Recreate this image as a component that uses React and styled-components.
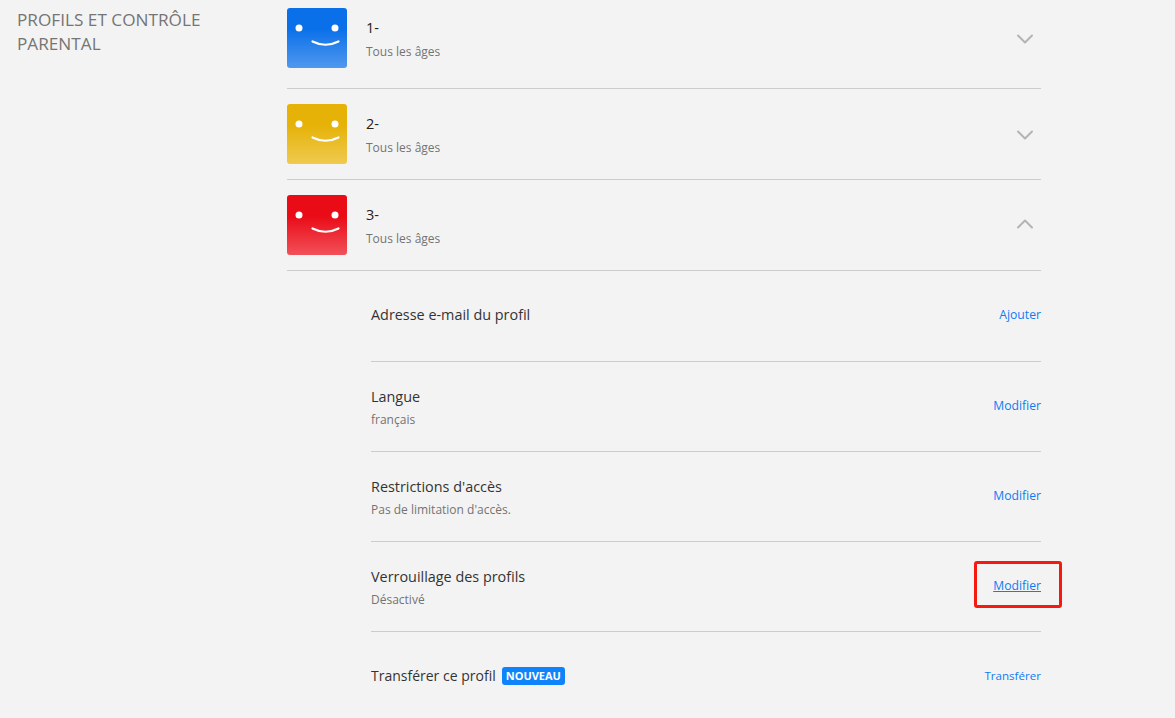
import React from "react";
import styled, { createGlobalStyle } from "styled-components";
import { ChevronDown, ChevronUp } from "lucide-react";

const GlobalStyle = createGlobalStyle`
  html, body {
    margin: 0;
    height: 100%;
    background: #f3f3f3;
    overflow: hidden;
  }
`;

const Page = styled.div`
  display: grid;
  grid-template-columns: 287px 754px;
  height: 718px;
  overflow: hidden;
  font-family: "Open Sans", "Noto Sans", sans-serif;
  color: #333;
`;

const SectionTitle = styled.h2`
  margin: 0;
  padding: 8px 0 0 17px;
  width: 210px;
  font-size: 17.2px;
  line-height: 24px;
  font-weight: 400;
  color: #757575;
`;

const ProfileRow = styled.div`
  display: flex;
  align-items: flex-start;
  box-sizing: border-box;
  height: ${({ $height }) => $height}px;
  padding-top: ${({ $top }) => $top}px;
  border-bottom: 1px solid #cccccc;
`;

const Avatar = styled.svg`
  display: block;
  flex: none;
  width: 60px;
  height: 60px;
  margin-right: 19px;
  border-radius: 3px;
  background: linear-gradient(
    180deg,
    ${({ $from }) => $from} 0%,
    ${({ $from }) => $from} 35%,
    ${({ $to }) => $to} 100%
  );
`;

const ProfileText = styled.div`
  flex: 1;
  padding-top: 9px;
`;

const ProfileName = styled.div`
  font-size: 14.5px;
  line-height: 22px;
  color: #222;
`;

const Hint = styled.div`
  font-size: 12px;
  line-height: 18px;
  margin-top: ${({ $gap }) => $gap}px;
  color: #737373;
`;

const Toggle = styled.div`
  display: flex;
  flex: none;
  margin: ${({ $top }) => $top}px 2px 0 0;
  color: #b3b3b3;
`;

const Details = styled.div`
  margin-left: 84px;
`;

const DetailRow = styled.div`
  display: flex;
  justify-content: space-between;
  align-items: flex-start;
  box-sizing: border-box;
  height: ${({ $height }) => $height}px;
  padding-top: ${({ $top }) => $top}px;
  border-bottom: ${({ $last }) => ($last ? "none" : "1px solid #cccccc")};
`;

const DetailTitle = styled.div`
  display: flex;
  align-items: center;
  font-size: ${({ $size }) => $size || 14.4}px;
  line-height: 22px;
  color: #333;
`;

const Badge = styled.span`
  margin-left: 6px;
  padding: 0 4px;
  height: 18px;
  line-height: 18px;
  border-radius: 3px;
  background: #0f84fa;
  color: #fff;
  font-size: 11px;
  font-weight: 700;
`;

const ActionLink = styled.a`
  position: relative;
  margin-top: ${({ $offset }) => $offset}px;
  font-size: ${({ $size }) => $size || 12.2}px;
  line-height: 22px;
  color: #0f7bf5;
  text-decoration: ${({ $active }) => ($active ? "underline" : "none")};
`;

const Highlight = styled.span`
  position: absolute;
  left: -19px;
  right: -21px;
  top: -14px;
  bottom: -11px;
  border: 3px solid #f5190f;
  border-radius: 3px;
`;

const Face = () => (
  <>
    <circle cx="12" cy="20" r="3.5" fill="#fff" />
    <circle cx="48" cy="20" r="3.5" fill="#fff" />
    <path d="M25.5 33.5 Q38.5 40 51.5 33.5" fill="none" stroke="#fff" strokeWidth="2.2" strokeLinecap="round" />
  </>
);

const profiles = [
  { name: "1-", from: "#0a70e9", to: "#5098ee", height: 89, top: 8, chevron: 17 },
  { name: "2-", from: "#e6b208", to: "#efca4f", height: 91, top: 15, chevron: 17 },
  { name: "3-", from: "#e90b16", to: "#f2505a", height: 91, top: 15, chevron: 15, open: true },
];

export default function App() {
  return (
    <Page>
      <GlobalStyle />
      <SectionTitle>PROFILS ET CONTRÔLE PARENTAL</SectionTitle>
      <div>
        {profiles.map((p) => (
          <ProfileRow key={p.name} $height={p.height} $top={p.top}>
            <Avatar viewBox="0 0 60 60" $from={p.from} $to={p.to}>
              <Face />
            </Avatar>
            <ProfileText>
              <ProfileName>{p.name}</ProfileName>
              <Hint $gap={4}>Tous les âges</Hint>
            </ProfileText>
            <Toggle $top={p.chevron}>
              {p.open ? <ChevronUp size={28} strokeWidth={1.7} /> : <ChevronDown size={28} strokeWidth={1.7} />}
            </Toggle>
          </ProfileRow>
        ))}
        <Details>
          <DetailRow $height={91} $top={33}>
            <DetailTitle>Adresse e-mail du profil</DetailTitle>
            <ActionLink>Ajouter</ActionLink>
          </DetailRow>
          <DetailRow $height={90} $top={24}>
            <div>
              <DetailTitle>Langue</DetailTitle>
              <Hint $gap={3}>français</Hint>
            </div>
            <ActionLink $offset={9}>Modifier</ActionLink>
          </DetailRow>
          <DetailRow $height={90} $top={24}>
            <div>
              <DetailTitle>Restrictions d'accès</DetailTitle>
              <Hint $gap={3}>Pas de limitation d'accès.</Hint>
            </div>
            <ActionLink $offset={9}>Modifier</ActionLink>
          </DetailRow>
          <DetailRow $height={90} $top={24}>
            <div>
              <DetailTitle>Verrouillage des profils</DetailTitle>
              <Hint $gap={3}>Désactivé</Hint>
            </div>
            <ActionLink $offset={9} $active>
              Modifier
              <Highlight />
            </ActionLink>
          </DetailRow>
          <DetailRow $height={86} $top={33} $last>
            <DetailTitle $size={14}>
              Transférer ce profil
              <Badge>NOUVEAU</Badge>
            </DetailTitle>
            <ActionLink $size={11.6}>Transférer</ActionLink>
          </DetailRow>
        </Details>
      </div>
    </Page>
  );
}
